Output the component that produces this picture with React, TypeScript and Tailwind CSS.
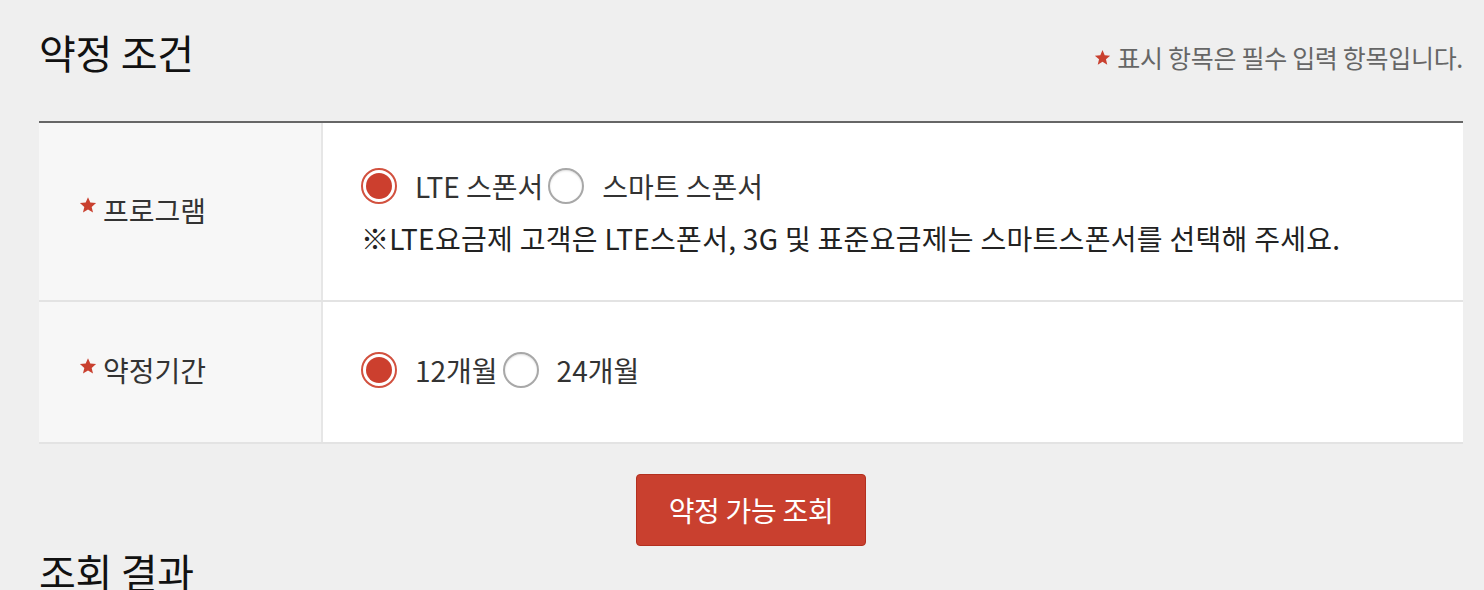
import React from 'react';

const FONT = "font-['Noto_Sans_CJK_KR','Noto_Sans',sans-serif]";

const Star = ({ size = 18 }: { size?: number }) => (
  <svg width={size} height={size} viewBox="0 0 24 24" className="inline-block shrink-0">
    <path
      d="M12 1.5l3.1 7.2 7.7.7-5.9 5.1 1.8 7.6L12 18.1l-6.7 4 1.8-7.6L1.2 9.4l7.7-.7z"
      fill="#c9402f"
    />
  </svg>
);

const Radio = ({ checked, label }: { checked: boolean; label: string }) => (
  <label className="flex items-center">
    {checked ? (
      <span className="flex items-center justify-center w-[36px] h-[36px] rounded-full border-2 border-[#d2513f] bg-white">
        <span className="w-[26px] h-[26px] rounded-full bg-[#cc3f2e]" />
      </span>
    ) : (
      <span className="w-[36px] h-[36px] rounded-full border-2 border-[#a8a8a8] bg-white shadow-[inset_0_1px_2px_rgba(0,0,0,0.12)]" />
    )}
    <span className="ml-[18px] mr-[5px] text-[28px] text-[#333] leading-none">{label}</span>
  </label>
);

const Label = ({ text }: { text: string }) => (
  <div className="w-[284px] shrink-0 bg-[#f7f7f7] border-r-2 border-[#e6e6e6] flex items-center pl-[40px] pb-[4px]">
    <span className="-mt-[14px] mr-[6px]">
      <Star />
    </span>
    <span className="text-[28px] text-[#333]">{text}</span>
  </div>
);

export default function App() {
  return (
    <div className={`${FONT} bg-[#efefef] w-[1484px] h-[590px] overflow-hidden pl-[39px] pr-[21px]`}>
      <div className="flex items-start justify-between h-[121px]">
        <h2 className="mt-[32px] text-[40px] font-normal text-[#111] leading-none tracking-[-0.3px]">약정 조건</h2>
        <p className="mt-[45px] flex items-center text-[25px] text-[#666] tracking-[-0.3px] leading-none">
          <span className="mr-[6px] -mt-[8px]">
            <Star size={17} />
          </span>
          표시 항목은 필수 입력 항목입니다.
        </p>
      </div>

      <div className="border-t-2 border-[#666] bg-white">
        <div className="flex h-[179px] border-b-2 border-[#e3e3e3]">
          <Label text="프로그램" />
          <div className="flex flex-col justify-center pl-[38px] pb-[4px]">
            <div className="flex items-center">
              <Radio checked label="LTE 스폰서" />
              <Radio checked={false} label="스마트 스폰서" />
            </div>
            <p className="mt-[20px] text-[28px] leading-none text-[#222] tracking-[0.3px]">
              ※LTE요금제 고객은 LTE스폰서, 3G 및 표준요금제는 스마트스폰서를 선택해 주세요.
            </p>
          </div>
        </div>
        <div className="flex h-[142px] border-b-2 border-[#e3e3e3]">
          <Label text="약정기간" />
          <div className="flex items-center pl-[38px] pb-[4px]">
            <Radio checked label="12개월" />
            <Radio checked={false} label="24개월" />
          </div>
        </div>
      </div>

      <div className="flex justify-center pt-[30px]">
        <button className="w-[230px] h-[72px] rounded-[4px] bg-[#c9402f] border border-[#b3301f] text-white text-[28px] font-normal tracking-[-0.3px]">
          약정 가능 조회
        </button>
      </div>

      <h2 className="mt-[5px] text-[40px] font-normal text-[#111] leading-none tracking-[-0.3px]">조회 결과</h2>
    </div>
  );
}
